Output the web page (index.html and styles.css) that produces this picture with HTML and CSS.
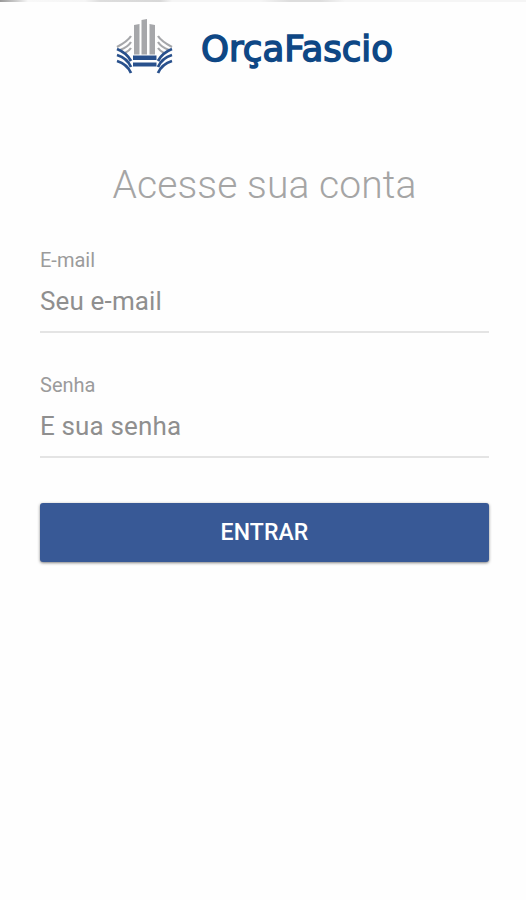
FILE: index.html
```
<!DOCTYPE html>
<html lang="pt-BR">
<head>
  <meta charset="UTF-8">
  <meta name="viewport" content="width=device-width, initial-scale=1.0">
  <title>OrçaFascio</title>
  <link rel="stylesheet" href="styles.css">
</head>
<body>
  <div class="status-edge"></div>
  <header class="header">
    <svg class="logo" viewBox="0 0 290 65" role="img" aria-label="OrçaFascio">
      <!-- torres -->
      <path fill="#a6a7aa" d="M18 13l5.500-1v30.500H18zM25.500 8l5.500-1v35.500h-5.500zM33.500 12l5.500 1v29.500h-5.500z"/>
      <!-- asas -->
      <g fill="none" stroke="#a6a7aa" stroke-width="2.200">
        <path d="M15 24Q12 29 1 35M15 30Q12 35 4 38M15 36Q13 39 9 41"/>
        <path d="M42 24Q45 29 56 35M42 30Q45 35 53 38M42 36Q44 39 48 41"/>
      </g>
      <g fill="none" stroke="#28508c" stroke-width="2.800">
        <path d="M1 37Q11 41 15 49M1 43Q11 46 15 55M1 49Q11 52 15 61"/>
        <path d="M56 37Q46 41 42 49M56 43Q46 46 42 55M56 49Q46 52 42 61"/>
      </g>
      <path fill="#28508c" d="M17 43.500h23.500v4.500H17zM17 50.500h23.500v4H17z"/>
      <text class="logo-name" x="85" y="48.500" textLength="192" lengthAdjust="spacingAndGlyphs">OrçaFascio</text>
    </svg>
  </header>

  <main class="container">
    <h1>Acesse sua conta</h1>
    <form>
      <label for="email">E-mail</label>
      <input type="email" id="email" placeholder="Seu e-mail">

      <label for="senha">Senha</label>
      <input type="password" id="senha" placeholder="E sua senha">

      <button type="button">ENTRAR</button>
    </form>
  </main>
</body>
</html>
```
FILE: styles.css
```
body {
  font-family: Roboto, sans-serif;
  margin: 0;
  min-height: 100vh;
  background: #fefefe;
}
.status-edge {
  height: 2px;
  background: linear-gradient(to right, #999 0, #ccc 16px, #f8f8f8 28px, #f5f5f5 85px, #ddd 100px, #d8d8d8 160px, #f5f5f5 172px, #f5f5f5 260px, #ddd 290px, #ddd 320px, #f5f5f5 345px);
}
.header {
  height: 78px;
  padding: 10px 0 0 116px;
  box-sizing: border-box;
}
.logo {
  display: block;
  width: 290px;
  height: 65px;
  overflow: visible;
}
.logo-name {
  font-family: "DejaVu Sans", sans-serif;
  font-size: 35px;
  fill: #0e4785;
  stroke: #0e4785;
  stroke-width: 1.5px;
}
.container {
  padding: 0 37px 20px 40px;
}
h1 {
  margin: 81px 0 38px;
  font-size: 39px;
  line-height: 49px;
  font-weight: 300;
  letter-spacing: 0.1px;
  text-align: center;
  color: #a5a5a5;
}
label {
  display: block;
  font-size: 20px;
  line-height: 24px;
  color: #9b9b9b;
}
input {
  display: block;
  width: 100%;
  height: 61px;
  margin: 0 0 40px;
  padding: 0 0 2px;
  box-sizing: border-box;
  border: 0;
  border-bottom: 2px solid #e4e4e4;
  background: none;
  font-family: inherit;
  font-size: 26px;
  letter-spacing: 0.15px;
}
input::placeholder {
  color: #8f8f8f;
}
button {
  display: block;
  width: 100%;
  height: 59px;
  margin-top: 45px;
  padding: 0 0 1px;
  border: 0;
  border-radius: 3px;
  background: #385996;
  box-shadow: 0 1px 3px rgba(0,0,0,0.5);
  color: #fff;
  font-family: inherit;
  font-size: 23px;
  font-weight: 500;
  letter-spacing: 0.1px;
}
```
